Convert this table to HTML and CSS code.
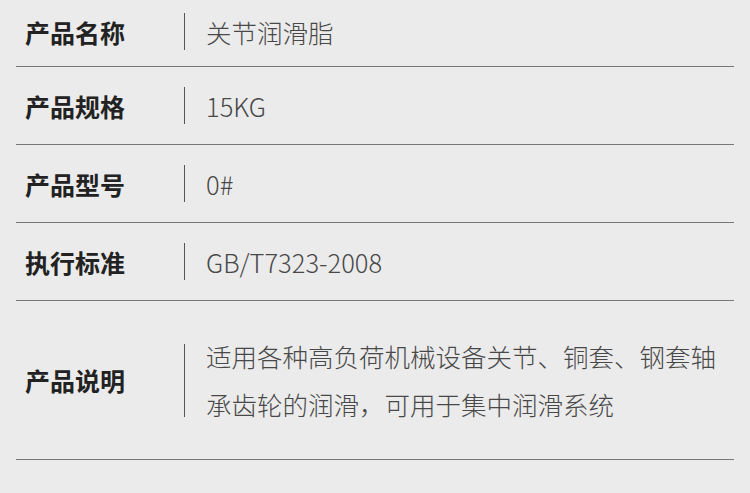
FILE: index.html
```html
<!DOCTYPE html>
<html lang="zh-CN">
<head>
  <meta charset="UTF-8">
  <meta name="viewport" content="width=device-width, initial-scale=1.0">
  <title>产品参数</title>
  <link rel="stylesheet" href="styles.css">
</head>
<body>
  <div class="spec-table">
    <div class="spec-row spec-row-first">
      <div class="spec-label">产品名称</div>
      <span class="spec-divider"></span>
      <div class="spec-value">关节润滑脂</div>
    </div>

    <div class="spec-row">
      <div class="spec-label">产品规格</div>
      <span class="spec-divider"></span>
      <div class="spec-value">15KG</div>
    </div>

    <div class="spec-row">
      <div class="spec-label">产品型号</div>
      <span class="spec-divider"></span>
      <div class="spec-value">0#</div>
    </div>

    <div class="spec-row">
      <div class="spec-label">执行标准</div>
      <span class="spec-divider"></span>
      <div class="spec-value">GB/T7323-2008</div>
    </div>

    <div class="spec-row spec-row-desc">
      <div class="spec-label">产品说明</div>
      <span class="spec-divider"></span>
      <div class="spec-value spec-desc">适用各种高负荷机械设备关节、铜套、钢套轴承齿轮的润滑，可用于集中润滑系统</div>
    </div>
  </div>
</body>
</html>
```

FILE: styles.css
```css
:root {
  --page-bg: #ebebeb;
  --line: #777;
  --label-color: #222;
  --value-color: #484848;
}

* {
  box-sizing: border-box;
  margin: 0;
  padding: 0;
}

body {
  background: var(--page-bg);
  font-family: "Noto Sans CJK SC", "Noto Sans", sans-serif;
  width: 750px;
  height: 493px;
  overflow: hidden;
}

.spec-table {
  padding: 0 16px;
}

.spec-row {
  display: flex;
  align-items: center;
  height: 78px;
  border-bottom: 1px solid var(--line);
}

.spec-row-first {
  height: 67px;
  padding-bottom: 3px;
}

.spec-row-desc {
  height: 159px;
}

.spec-label {
  width: 168px;
  padding-left: 9px;
  flex-shrink: 0;
  font-size: 25px;
  font-weight: 700;
  color: var(--label-color);
}

.spec-divider {
  width: 1px;
  height: 37px;
  background: #555;
  flex-shrink: 0;
}

.spec-row-desc .spec-divider {
  height: 73px;
}

.spec-value {
  margin-left: 21px;
  font-size: 25.5px;
  font-weight: 300;
  color: var(--value-color);
}

.spec-desc {
  width: 520px;
  line-height: 48px;
}
```
